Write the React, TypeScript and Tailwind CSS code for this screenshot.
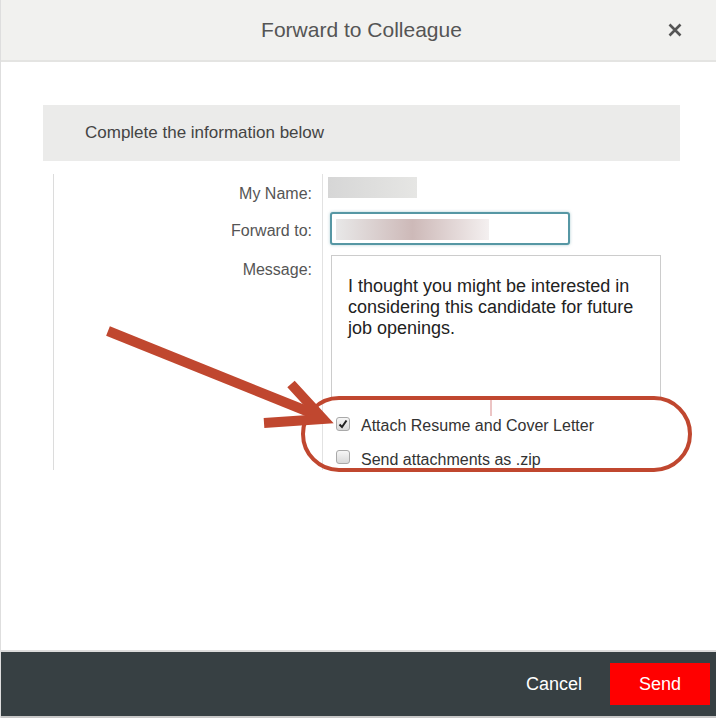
function CheckBox({ checked }: { checked?: boolean }) {
  return (
    <span className="flex h-[14px] w-[14px] items-center justify-center rounded-[3px] border border-[#a9a9a9] bg-gradient-to-b from-[#f6f6f6] to-[#d9d9d9]">
      {checked && (
        <svg width="10" height="10" viewBox="0 0 10 10">
          <path d="M1.5 5.5 L4 8 L8.5 1.5" fill="none" stroke="#222" strokeWidth="2" />
        </svg>
      )}
    </span>
  );
}

export default function App() {
  return (
    <div className="relative flex h-[718px] w-[716px] flex-col border-l border-[#dedede] bg-white font-['Liberation_Sans',Arial,sans-serif]">
      {/* header */}
      <div className="grid h-[62px] grid-cols-[1fr_auto_1fr] items-center border-b-2 border-[#e4e4e2] bg-[#f1f1ef]">
        <div />
        <h1 className="pl-[6px] text-[21px] text-[#555]">Forward to Colleague</h1>
        <div className="flex justify-end pr-[34px]">
          <svg width="14" height="14" viewBox="0 0 14 14">
            <path d="M1.5 1.5 L12.5 12.5 M12.5 1.5 L1.5 12.5" stroke="#555" strokeWidth="2.6" />
          </svg>
        </div>
      </div>

      {/* body */}
      <div className="flex-1 pt-[43px]">
        <div className="ml-[42px] mr-[36px] flex h-[56px] items-center bg-[#ebebea] pl-[42px] text-[17px] text-[#444]">
          Complete the information below
        </div>

        <div className="ml-[52px] mt-[13px] grid h-[296px] grid-cols-[269px_1fr] grid-rows-[31px_45px_148px_auto_1fr] border-l border-[#dcdcdc] text-[16px]">
          {/* My Name */}
          <div className="border-r border-[#e2e2e2] pr-[10px] pt-[11px] text-right leading-[18px] text-[#555]">My Name:</div>
          <div className="pl-[5px] pt-[3px]">
            <div className="h-[21px] w-[89px] bg-gradient-to-r from-[#d6d6d6] to-[#e6e6e4]" />
          </div>

          {/* Forward to */}
          <div className="border-r border-[#e2e2e2] pr-[10px] pt-[17px] text-right leading-[18px] text-[#555]">Forward to:</div>
          <div className="pl-[7px] pt-[7px]">
            <div className="h-[33px] w-[240px] rounded-[3px] border-2 border-[#5697a4] bg-white pl-[4px] pt-[5px] shadow-[0_0_3px_rgba(86,151,164,0.5)]">
              <div className="h-[21px] w-[153px] bg-gradient-to-r from-[#e8e8e8] via-[#cdb9b8] to-[#f4f0f0]" />
            </div>
          </div>

          {/* Message */}
          <div className="border-r border-[#e2e2e2] pr-[10px] pt-[11px] text-right leading-[18px] text-[#555]">Message:</div>
          <div className="pl-[8px] pt-[5px]">
            <div className="h-[143px] w-[330px] border border-[#cccccc] bg-white pl-[16px] pr-[10px] pt-[20px] text-[18px] leading-[21px] text-[#222]">
              I thought you might be interested in considering this candidate for future job openings.
            </div>
          </div>

          {/* checkboxes */}
          <div className="border-r border-[#e2e2e2]" />
          <div className="flex flex-col gap-[15px] pl-[13px] pt-[17px] text-[16px] text-[#333]">
            <label className="flex h-[18px] items-center gap-[11px]">
              <CheckBox checked />
              <span className="pt-[4px]">Attach Resume and Cover Letter</span>
            </label>
            <label className="flex h-[18px] items-center gap-[11px]">
              <CheckBox />
              <span className="pt-[5px]">Send attachments as .zip</span>
            </label>
          </div>

          <div className="border-r border-[#e2e2e2]" />
          <div />
        </div>
      </div>

      {/* footer */}
      <div className="flex h-[68px] items-center justify-end gap-[28px] border-y-2 border-t-[#dcdcdc] border-b-[#c8c8c8] bg-[#374043] pr-[6px] text-[18px] text-white">
        <button className="text-white">Cancel</button>
        <button className="h-[42px] w-[100px] bg-[#ff0000] text-white">Send</button>
      </div>

      {/* annotation */}
      <svg className="pointer-events-none absolute left-0 top-0" width="716" height="718" viewBox="0 0 716 718">
        <line x1="490" y1="396" x2="490" y2="416" stroke="#d98a8a" strokeWidth="1" />
        <rect x="302" y="398" width="387" height="72" rx="36" fill="none" stroke="#c0472f" strokeWidth="4" />
        <line x1="107" y1="331" x2="318" y2="416" stroke="#c0472f" strokeWidth="10" />
        <path d="M290 384 L322 419 L263 423" fill="none" stroke="#c0472f" strokeWidth="10" strokeLinejoin="miter" />
      </svg>
    </div>
  );
}
